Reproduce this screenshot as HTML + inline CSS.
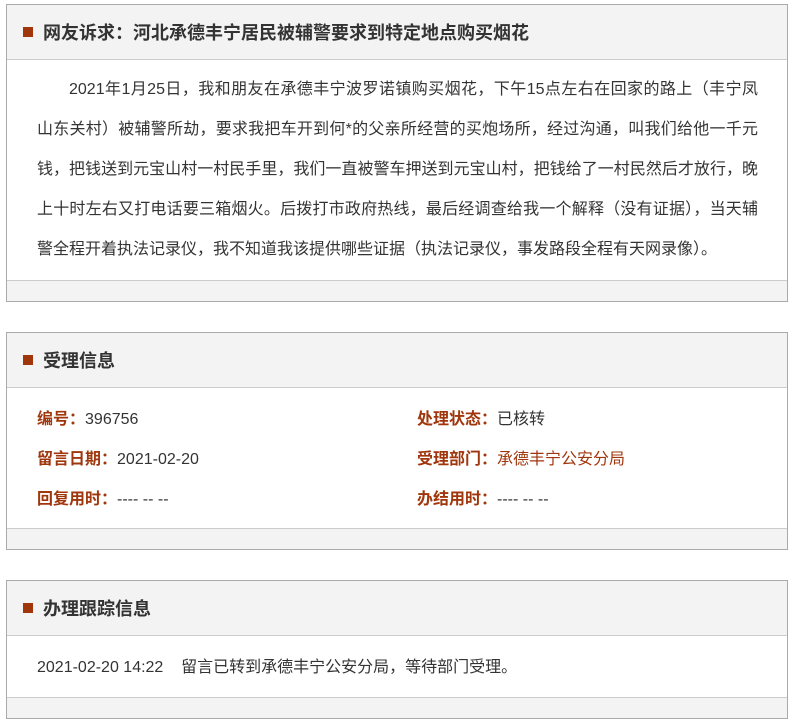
<!DOCTYPE html>
<html><head><meta charset="utf-8"><style>
body{margin:0;background:#fff;width:793px;height:727px;position:relative;font-family:"Liberation Sans","Noto Sans CJK SC",sans-serif;color:#333;}
.box{position:absolute;left:6px;width:780px;border:1px solid #aaa;background:#fff;}
.hd{height:54px;background:#f3f3f3;border-bottom:1px solid #ccc;position:relative;}
.hd .sq{position:absolute;left:16px;top:22px;width:10px;height:10px;background:#a0360c;}
.hd .t{position:absolute;left:36px;top:0;line-height:56px;font-size:18px;font-weight:bold;color:#333;}
.ft{height:20px;background:#f3f3f3;border-top:1px solid #ccc;}
.txt{font-size:16px;line-height:40px;padding:10px 29px 0 30px;box-sizing:border-box;overflow:hidden;}
.txt div{white-space:nowrap;text-align:justify;text-align-last:justify;}
.txt div.last{text-align-last:auto;}
.lb{color:#a0360c;font-weight:bold;}
.lb2{color:#a0360c;}
.row{position:absolute;font-size:16px;}
</style></head><body>
<div class="box" style="top:4px;height:296px">
<div class="hd"><div class="sq"></div><div class="t">网友诉求：河北承德丰宁居民被辅警要求到特定地点购买烟花</div></div>
<div class="txt" style="height:220px">
<div style="padding-left:32px;white-space:normal">2021年1月25日，我和朋友在承德丰宁波罗诺镇购买烟花，下午15点左右在回家的路上（丰宁凤</div>
<div style="white-space:normal">山东关村）被辅警所劫，要求我把车开到何*的父亲所经营的买炮场所，经过沟通，叫我们给他一千元</div>
<div style="white-space:normal">钱，把钱送到元宝山村一村民手里，我们一直被警车押送到元宝山村，把钱给了一村民然后才放行，晚</div>
<div style="white-space:normal">上十时左右又打电话要三箱烟火。后拨打市政府热线，最后经调查给我一个解释（没有证据），当天辅</div>
<div class="last">警全程开着执法记录仪，我不知道我该提供哪些证据（执法记录仪，事发路段全程有天网录像）。</div>
</div>
<div class="ft"></div>
</div>
<div class="box" style="top:332px;height:216px">
<div class="hd"><div class="sq"></div><div class="t">受理信息</div></div>
<div style="position:relative;height:140px">
<div class="row" style="left:30px;top:17px"><span class="lb">编号：</span>396756</div>
<div class="row" style="left:410px;top:17px"><span class="lb">处理状态：</span>已核转</div>
<div class="row" style="left:30px;top:57px"><span class="lb">留言日期：</span>2021-02-20</div>
<div class="row" style="left:410px;top:57px"><span class="lb">受理部门：</span><span class="lb2">承德丰宁公安分局</span></div>
<div class="row" style="left:30px;top:97px"><span class="lb">回复用时：</span>---- -- --</div>
<div class="row" style="left:410px;top:97px"><span class="lb">办结用时：</span>---- -- --</div>
</div>
<div class="ft"></div>
</div>
<div class="box" style="top:580px;height:137px">
<div class="hd"><div class="sq"></div><div class="t">办理跟踪信息</div></div>
<div style="position:relative;height:61px"><div class="row" style="left:30px;top:17px">2021-02-20 14:22&nbsp;&nbsp;&nbsp;&nbsp;留言已转到承德丰宁公安分局，等待部门受理。</div></div>
<div class="ft"></div>
</div>
</body></html>
